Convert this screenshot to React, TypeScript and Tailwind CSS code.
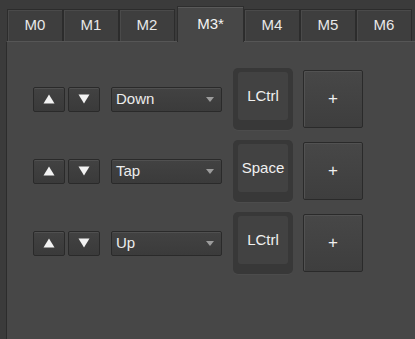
import React from "react";

const tabs = ["M0", "M1", "M2", "M3*", "M4", "M5", "M6"];
const rows = [
  { mode: "Down", key: "LCtrl" },
  { mode: "Tap", key: "Space" },
  { mode: "Up", key: "LCtrl" },
];

function Tri({ up }: { up: boolean }) {
  return (
    <svg width="12" height="10" viewBox="0 0 12 10">
      {up ? <polygon points="6,0.5 11.5,9.5 0.5,9.5" fill="#f2f2f2" /> : <polygon points="0.5,0.5 11.5,0.5 6,9.5" fill="#f2f2f2" />}
    </svg>
  );
}

export default function App() {
  return (
    <div
      className="w-[415px] h-[339px] overflow-hidden bg-[#3b3b3b] flex flex-col text-[#ececec]"
      style={{ fontFamily: '"Liberation Sans", Arial, sans-serif' }}
    >
      <div className="h-[41px] flex items-end pl-[7px] shrink-0 relative z-10">
        {tabs.map((t) => {
          const sel = t === "M3*";
          return sel ? (
            <div
              key={t}
              className="ml-[2px] mr-[0px] w-[67px] h-[36px] mb-[-1px] bg-[#474747] border border-b-0 border-[#2e2e2e] shadow-[inset_0_1px_0_#5a5a5a] flex items-center justify-center text-[15px] text-[#f4f4f4] pb-[1px]"
            >
              {t}
            </div>
          ) : (
            <div
              key={t}
              className="w-[56px] h-[32px] bg-[#3e3e3e] border border-b-0 border-[#2c2c2c] shadow-[inset_1px_1px_0_#4a4a4a] flex items-center justify-center text-[15px] text-[#e8e8e8]"
            >
              {t}
            </div>
          );
        })}
      </div>
      <div className="ml-[6px] flex-1 bg-[#474747] border-l border-t border-l-[#2c2c2c] border-t-[#565656] pl-[26px] pt-[26px] flex flex-col gap-[10px]">
        {rows.map((r, i) => (
          <div key={i} className="flex items-center h-[62px]">
            <div className="flex gap-[3px]">
              <div className="w-[32px] h-[25px] rounded-[2px] border border-[#2a2a2a] bg-gradient-to-b from-[#424242] to-[#3a3a3a] shadow-[inset_0_1px_0_#505050] flex items-center justify-center">
                <Tri up />
              </div>
              <div className="w-[32px] h-[25px] rounded-[2px] border border-[#2a2a2a] bg-gradient-to-b from-[#424242] to-[#3a3a3a] shadow-[inset_0_1px_0_#505050] flex items-center justify-center">
                <Tri up={false} />
              </div>
            </div>
            <div className="ml-[11px] w-[111px] h-[25px] rounded-[2px] border border-[#2a2a2a] bg-gradient-to-b from-[#424242] to-[#3b3b3b] shadow-[inset_0_1px_0_#505050] flex items-center pl-[4px] pr-[7px] text-[15px] text-[#ececec]">
              <span className="flex-1">{r.mode}</span>
              <svg width="8" height="5" viewBox="0 0 8 5">
                <polygon points="0,0 8,0 4,5" fill="#9c9c9c" />
              </svg>
            </div>
            <div className="ml-[11px] w-[60px] h-[62px] rounded-[5px] bg-[#383838] pt-[4px] px-[5px] pb-[10px] shadow-[0_1px_0_#4c4c4c]">
              <div className="w-full h-full rounded-[3px] bg-[#424242] flex items-center justify-center text-[15px] text-[#f0f0f0]">
                {r.key}
              </div>
            </div>
            <div className="ml-[10px] w-[60px] h-[58px] rounded-[2px] border border-[#2a2a2a] bg-gradient-to-b from-[#474747] to-[#3e3e3e] shadow-[inset_1px_1px_0_#525252] flex items-center justify-center text-[17px] text-[#f0f0f0]">
              +
            </div>
          </div>
        ))}
      </div>
    </div>
  );
}
